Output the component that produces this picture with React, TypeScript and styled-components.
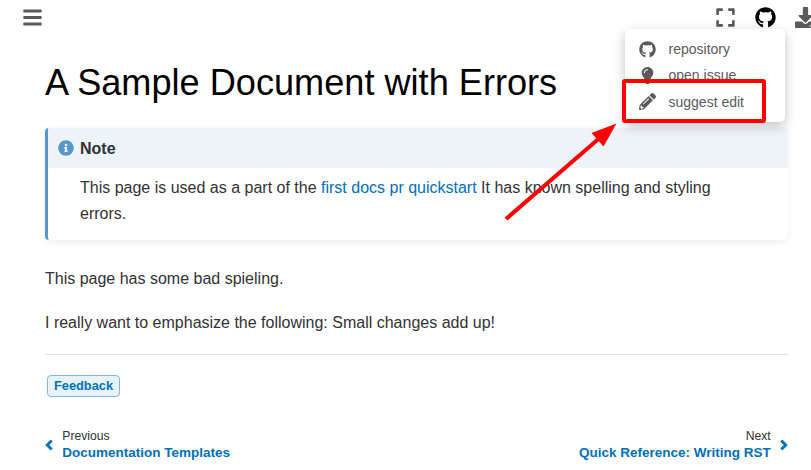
import React from 'react';
import styled, { createGlobalStyle } from 'styled-components';
import {
  FaBars,
  FaExpand,
  FaGithub,
  FaDownload,
  FaLightbulb,
  FaPencilAlt,
  FaInfoCircle,
  FaAngleLeft,
  FaAngleRight,
} from 'react-icons/fa';

const GlobalStyle = createGlobalStyle`
  * { box-sizing: border-box; }
  body {
    margin: 0;
    background: #fff;
    color: #323232;
    font-family: "Liberation Sans", Arial, sans-serif;
    font-size: 16px;
    overflow: hidden;
  }
  a { color: #0071bc; text-decoration: none; }
  svg { display: block; flex-shrink: 0; }
`;

const Page = styled.div`
  position: relative;
  width: 811px;
  height: 470px;
  overflow: hidden;
`;

const Toolbar = styled.header`
  display: flex;
  justify-content: space-between;
  height: 34px;
  padding-left: 23px;
  color: #5a5a5a;
`;

const ToolGroup = styled.div`
  display: flex;
  align-items: center;
  flex-shrink: 0;
`;

const ToolButton = styled.button<{ $active?: boolean; $width: number; $clipped?: boolean }>`
  display: flex;
  justify-content: ${(p) => (p.$clipped ? 'flex-start' : 'center')};
  width: ${(p) => p.$width}px;
  flex-shrink: 0;
  padding: 0;
  border: 0;
  background: none;
  color: ${(p) => (p.$active ? '#000' : '#5a5a5a')};
  font-size: 21px;
`;

const Content = styled.main`
  width: 743px;
  margin-left: 45px;
`;

const Title = styled.h1`
  margin: 28px 0 0;
  color: #000;
  font-size: 36.15px;
  line-height: 42px;
  font-weight: 400;
  white-space: nowrap;
`;

const Admonition = styled.section`
  height: 112px;
  margin-top: 24px;
  border-left: 3px solid #5599cc;
  border-radius: 4px;
  box-shadow: 0 3px 8px rgba(0, 0, 0, 0.06), 0 0 1px rgba(0, 0, 0, 0.12);
  overflow: hidden;
`;

const AdmonitionTitle = styled.div`
  display: flex;
  align-items: center;
  gap: 6px;
  height: 40px;
  padding-left: 10px;
  background: #ecf4fa;
  font-weight: 700;
  svg { color: #5599cc; }
`;

const AdmonitionLabel = styled.span`
  padding-top: 2px;
`;

const AdmonitionBody = styled.p`
  margin: 0;
  padding: 7px 60px 0 32px;
  line-height: 26px;
`;

const Paragraph = styled.p<{ $top: number }>`
  margin: ${(p) => p.$top}px 0 0;
  line-height: 26px;
`;

const Divider = styled.hr`
  height: 1px;
  margin: 18px 0 0;
  border: 0;
  background: #e0e0e0;
`;

const Feedback = styled.a`
  display: flex;
  align-items: center;
  justify-content: center;
  width: 73px;
  height: 22px;
  margin: 20px 0 0 2px;
  padding-bottom: 1px;
  border: 1px solid #7fb8dd;
  border-radius: 4px;
  background: #e7f2fa;
  font-size: 12.8px;
  font-weight: 700;
`;

const PageNav = styled.nav`
  display: flex;
  justify-content: space-between;
  margin-top: 31px;
`;

const NavLink = styled.a<{ $next?: boolean }>`
  display: flex;
  align-items: center;
  gap: 9.6px;
  text-align: ${(p) => (p.$next ? 'right' : 'left')};
`;

const NavIcon = styled.span`
  display: flex;
  justify-content: center;
  width: 7.7px;
  font-size: 16px;
  svg { stroke: currentColor; stroke-width: 16px; }
`;

const NavText = styled.span`
  display: flex;
  flex-direction: column;
`;

const NavLabel = styled.span`
  color: #323232;
  font-size: 12.2px;
  line-height: 16px;
`;

const NavTitle = styled.span`
  font-size: 13.5px;
  font-weight: 700;
  line-height: 18px;
`;

const Menu = styled.div`
  position: absolute;
  left: 625px;
  top: 29px;
  width: 160px;
  height: 93px;
  padding-top: 7px;
  border-radius: 5px;
  background: #fff;
  box-shadow: 0 4px 12px rgba(0, 0, 0, 0.25);
`;

const MenuItem = styled.a`
  display: flex;
  align-items: center;
  gap: 12px;
  height: 26.3px;
  padding-left: 14px;
  color: #5a5a5a;
  font-size: 14px;
`;

const MenuIcon = styled.span`
  display: flex;
  justify-content: center;
  width: 17.5px;
  font-size: 17px;
`;

const Highlight = styled.div`
  position: absolute;
  left: 622px;
  top: 79px;
  width: 144px;
  height: 44px;
  border: 4px solid #f00;
  border-radius: 3px;
`;

const Arrow = styled.svg`
  position: absolute;
  left: 500px;
  top: 118px;
`;

export default function App() {
  return (
    <Page>
      <GlobalStyle />
      <Toolbar>
        <ToolGroup>
          <ToolButton $width={19} aria-label="Toggle navigation"><FaBars /></ToolButton>
        </ToolGroup>
        <ToolGroup>
          <ToolButton $width={40} aria-label="Fullscreen"><FaExpand /></ToolButton>
          <ToolButton $width={40} $active aria-label="Source repository"><FaGithub /></ToolButton>
          <ToolButton $width={26} $clipped aria-label="Download">
            <DownloadSlot><FaDownload /></DownloadSlot>
          </ToolButton>
        </ToolGroup>
      </Toolbar>
      <Content>
        <Title>A Sample Document with Errors</Title>
        <Admonition>
          <AdmonitionTitle>
            <FaInfoCircle />
            <AdmonitionLabel>Note</AdmonitionLabel>
          </AdmonitionTitle>
          <AdmonitionBody>
            This page is used as a part of the <a href="#quickstart">first docs pr quickstart</a> It
            has known spelling and styling errors.
          </AdmonitionBody>
        </Admonition>
        <Paragraph $top={26}>This page has some bad spieling.</Paragraph>
        <Paragraph $top={18}>I really want to emphasize the following: Small changes add up!</Paragraph>
        <Divider />
        <Feedback href="#feedback">Feedback</Feedback>
        <PageNav>
          <NavLink href="#previous">
            <NavIcon><FaAngleLeft /></NavIcon>
            <NavText>
              <NavLabel>Previous</NavLabel>
              <NavTitle>Documentation Templates</NavTitle>
            </NavText>
          </NavLink>
          <NavLink href="#next" $next>
            <NavText>
              <NavLabel>Next</NavLabel>
              <NavTitle>Quick Reference: Writing RST</NavTitle>
            </NavText>
            <NavIcon><FaAngleRight /></NavIcon>
          </NavLink>
        </PageNav>
      </Content>
      <Menu>
        <MenuItem><MenuIcon><FaGithub /></MenuIcon>repository</MenuItem>
        <MenuItem><MenuIcon><FaLightbulb /></MenuIcon>open issue</MenuItem>
        <MenuItem><MenuIcon><FaPencilAlt /></MenuIcon>suggest edit</MenuItem>
      </Menu>
      <Highlight />
      <Arrow width="120" height="105" viewBox="500 118 120 105">
        <path d="M506 219 L599 138.500" stroke="#f00" strokeWidth="4" />
        <path d="M616.500 123.500 L591.500 133 L603.500 146.500 Z" fill="#f00" />
      </Arrow>
    </Page>
  );
}

const DownloadSlot = styled.span`
  margin-left: 10px;
`;
